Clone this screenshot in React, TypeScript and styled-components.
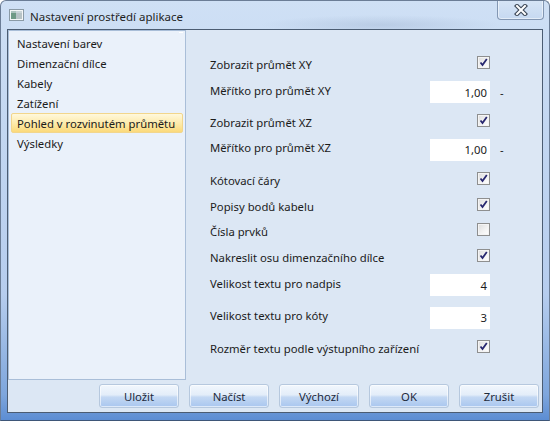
import React from "react";
import styled, { createGlobalStyle } from "styled-components";

const GlobalStyle = createGlobalStyle`
  html, body {
    margin: 0;
    padding: 0;
    background: #ffffff;
  }
  body {
    font-family: "Noto Sans", "Segoe UI", sans-serif;
    font-size: 11.3px;
    color: #1b1b1b;
  }
  * {
    box-sizing: border-box;
  }
`;

type Row = {
  label: string;
  kind: "check" | "input";
  h: number;
  checked?: boolean;
  value?: string;
  unit?: string;
};

const menuItems = [
  "Nastavení barev",
  "Dimenzační dílce",
  "Kabely",
  "Zatížení",
  "Pohled v rozvinutém průmětu",
  "Výsledky",
];

const rows: Row[] = [
  { label: "Zobrazit průmět XY", kind: "check", h: 30, checked: true },
  { label: "Měřítko pro průmět XY", kind: "input", h: 30, value: "1,00", unit: "-" },
  { label: "Zobrazit průmět XZ", kind: "check", h: 27, checked: true },
  { label: "Měřítko pro průmět XZ", kind: "input", h: 31, value: "1,00", unit: "-" },
  { label: "Kótovací čáry", kind: "check", h: 27, checked: true },
  { label: "Popisy bodů kabelu", kind: "check", h: 25, checked: true },
  { label: "Čísla prvků", kind: "check", h: 25, checked: false },
  { label: "Nakreslit osu dimenzačního dílce", kind: "check", h: 26, checked: true },
  { label: "Velikost textu pro nadpis", kind: "input", h: 34, value: "4" },
  { label: "Velikost textu pro kóty", kind: "input", h: 31, value: "3" },
  { label: "Rozměr textu podle výstupního zařízení", kind: "check", h: 26, checked: true },
];

const buttons = ["Uložit", "Načíst", "Výchozí", "OK", "Zrušit"];

const AppIcon = () => (
  <svg width="15" height="12" viewBox="0 0 15 12">
    <rect x="0.5" y="0.5" width="14" height="11" fill="#f4f6f7" stroke="#8a9aa6" />
    <rect x="2" y="2" width="5" height="8" fill="#6f9a86" />
    <rect x="7" y="2" width="6" height="8" fill="#b7c3c6" />
    <rect x="2" y="2" width="11" height="2" fill="#d6e0e4" opacity="0.6" />
  </svg>
);

const CloseGlyph = () => (
  <svg width="14" height="12" viewBox="0 0 14 12">
    <path d="M3 2 L11 10 M11 2 L3 10" stroke="#3b4656" strokeWidth="4.2" strokeLinecap="square" />
    <path d="M3 2 L11 10 M11 2 L3 10" stroke="#ffffff" strokeWidth="2" strokeLinecap="square" />
  </svg>
);

const CheckBox = ({ checked }: { checked?: boolean }) => (
  <Box>
    {checked && (
      <svg width="9" height="9" viewBox="0 0 9 9">
        <path d="M1.5 4.5 L3.5 7 L7.8 1" stroke="#27276f" strokeWidth="1.8" fill="none" />
      </svg>
    )}
  </Box>
);

const App = () => {
  return (
    <>
      <GlobalStyle />
      <Window>
        <TitleBar>
          <AppIcon />
          <Title>Nastavení prostředí aplikace</Title>
          <CloseButton>
            <CloseGlyph />
          </CloseButton>
        </TitleBar>
        <Client>
          <Main>
            <ListPanel>
              {menuItems.map((item, i) => (
                <ListItem key={item} $selected={i === 4}>
                  {item}
                </ListItem>
              ))}
            </ListPanel>
            <Settings>
              {rows.map((r) => (
                <SettingRow key={r.label} $h={r.h}>
                  <Label $kind={r.kind}>{r.label}</Label>
                  <Control>
                    {r.kind === "check" ? (
                      <CheckBox checked={r.checked} />
                    ) : (
                      <ValueBox>{r.value}</ValueBox>
                    )}
                  </Control>
                  <Unit>{r.unit}</Unit>
                </SettingRow>
              ))}
            </Settings>
          </Main>
          <ButtonBar>
            {buttons.map((b) => (
              <DlgButton key={b}>{b}</DlgButton>
            ))}
          </ButtonBar>
        </Client>
      </Window>
    </>
  );
};

const Window = styled.div`
  width: 550px;
  height: 421px;
  display: flex;
  flex-direction: column;
  border: 1px solid #6b7d96;
  border-bottom-color: #3e5678;
  border-radius: 6px 6px 0 0;
  padding: 0 6px 7px 6px;
  background:
    radial-gradient(ellipse 120px 10px at 380px 24px, rgba(150, 170, 200, 0.35), transparent),
    linear-gradient(180deg, #cfe0f5 0%, #c3d7f1 30%, #b6cdee 70%, #7ea6dc 94%, #5c8dd3 100%);
  overflow: hidden;
`;

const TitleBar = styled.div`
  height: 28px;
  display: flex;
  align-items: center;
  padding-left: 2px;
  position: relative;
`;

const Title = styled.span`
  margin-left: 6px;
  margin-top: 2px;
  font-size: 11.5px;
  color: #1e1e1e;
`;

const CloseButton = styled.div`
  position: absolute;
  right: -1px;
  top: -1px;
  width: 47px;
  height: 20px;
  display: flex;
  align-items: center;
  justify-content: center;
  border: 1px solid #8397b3;
  border-top: none;
  border-radius: 0 0 4px 4px;
  background: linear-gradient(180deg, #d7e5f6 0%, #c6d9f1 100%);
  box-shadow: inset 0 0 0 1px rgba(255, 255, 255, 0.5);
`;

const Client = styled.div`
  flex: 1;
  display: flex;
  flex-direction: column;
  border: 1px solid #4b5c72;
  background: #dce7f4;
`;

const Main = styled.div`
  flex: 1;
  display: flex;
`;

const ListPanel = styled.div`
  width: 178px;
  height: 350px;
  padding-top: 2px;
  background: #eaf1fa;
  border: 1px solid #a9bed8;
  position: relative;
  &::after {
    content: "";
    position: absolute;
    right: 2px;
    top: 1px;
    width: 4px;
    height: 1px;
    background: #ffffff;
  }
`;

const ListItem = styled.div<{ $selected?: boolean }>`
  height: 20px;
  margin: 0 2px;
  padding-left: 5px;
  display: flex;
  align-items: center;
  white-space: nowrap;
  border: 1px solid ${(p) => (p.$selected ? "#f2d68c" : "transparent")};
  border-radius: 2px;
  background: ${(p) =>
    p.$selected ? "linear-gradient(180deg, #fff8dc 0%, #fdeaa8 55%, #fbd97a 100%)" : "transparent"};
`;

const Settings = styled.div`
  flex: 1;
  padding-top: 17px;
  display: flex;
  flex-direction: column;
`;

const SettingRow = styled.div<{ $h: number }>`
  height: ${(p) => p.$h}px;
  padding-left: 24px;
  display: grid;
  grid-template-columns: 1fr 60px 52px;
  align-items: center;
`;

const Label = styled.span<{ $kind: "check" | "input" }>`
  white-space: nowrap;
  position: relative;
  top: ${(p) => (p.$kind === "check" ? "2px" : "-2px")};
`;

const Control = styled.div`
  display: flex;
  justify-content: flex-end;
`;

const Box = styled.div`
  width: 13px;
  height: 13px;
  border: 1px solid #8e8f8f;
  background: linear-gradient(135deg, #dcdcdc 0%, #f4f4f4 60%, #ffffff 100%);
  box-shadow: inset 0 0 0 1px #f4f4f4;
  display: flex;
  align-items: center;
  justify-content: center;
`;

const ValueBox = styled.div`
  width: 60px;
  height: 22px;
  background: #ffffff;
  padding-right: 3px;
  display: flex;
  align-items: center;
  justify-content: flex-end;
`;

const Unit = styled.span`
  padding-left: 10px;
`;

const ButtonBar = styled.div`
  height: 31px;
  display: flex;
  justify-content: flex-end;
  gap: 10px;
  padding: 3px 3px 0 0;
`;

const DlgButton = styled.div`
  width: 80px;
  height: 24px;
  display: flex;
  align-items: center;
  justify-content: center;
  color: #1d2a3c;
  border: 1px solid #b6c8de;
  border-radius: 3px;
  background: linear-gradient(180deg, #f2f7fd 0%, #e3edf9 45%, #c3d8f3 55%, #a9c6ef 100%);
  box-shadow: inset 0 0 0 1px rgba(255, 255, 255, 0.6);
`;

export default App;
